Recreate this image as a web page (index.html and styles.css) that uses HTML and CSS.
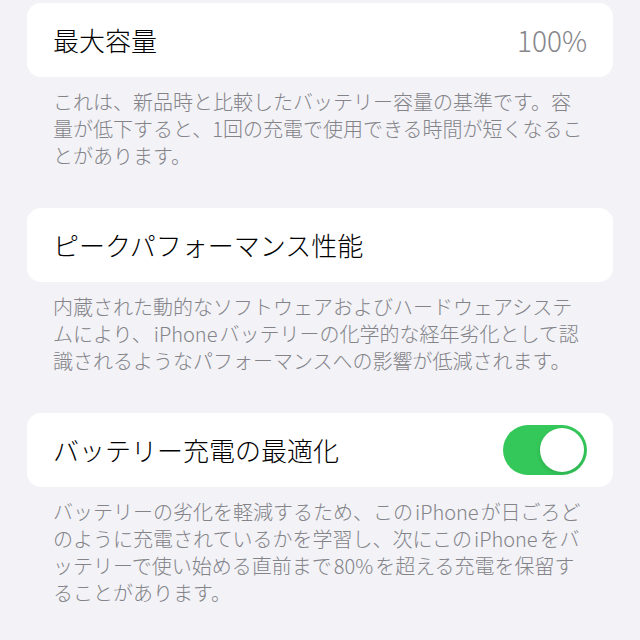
FILE: index.html
```html
<!DOCTYPE html>
<html lang="ja">
<head>
    <meta name="viewport" content="width=device-width, initial-scale=1.0">
    <title>バッテリーの状態と充電</title>
    <link rel="stylesheet" href="styles.css">
</head>
<body>
    <div class="settings">
        <div class="group">
            <div class="cell">
                <span class="label">最大容量</span>
                <span class="value">100%</span>
            </div>
            <p class="footer">これは、新品時と比較したバッテリー容量の基準です。容<br>量が低下すると、1回の充電で使用できる時間が短くなるこ<br>とがあります。</p>
        </div>

        <div class="group">
            <div class="cell">
                <span class="label">ピークパフォーマンス性能</span>
            </div>
            <p class="footer">内蔵された動的なソフトウェアおよびハードウェアシステ<br>ムにより、<span class="latin">iPhone</span>バッテリーの化学的な経年劣化として認<br>識されるようなパフォーマンスへの影響が低減されます。</p>
        </div>

        <div class="group">
            <div class="cell">
                <span class="label">バッテリー充電の最適化</span>
                <span class="switch on"><span class="knob"></span></span>
            </div>
            <p class="footer">バッテリーの劣化を軽減するため、この<span class="latin">iPhone</span>が日ごろど<br>のように充電されているかを学習し、次にこの<span class="latin">iPhone</span>をバ<br>ッテリーで使い始める直前まで<span class="latin">80%</span>を超える充電を保留す<br>ることがあります。</p>
        </div>
    </div>
</body>
</html>
```

FILE: styles.css
```css
body {
    margin: 0;
    background: #f2f2f7;
    font-family: "Noto Sans CJK JP", "Noto Sans", sans-serif;
    color: #000;
}
.settings {
    padding: 3px 27px 0;
}
.group {
    margin-bottom: 39px;
}
.cell {
    height: 74px;
    display: flex;
    align-items: center;
    justify-content: space-between;
    padding: 0 26px;
    background: #fff;
    border-radius: 14px;
}
.label {
    font-size: 26px;
    font-weight: 300;
    line-height: 1;
}
.value {
    font-size: 28px;
    font-weight: 300;
    line-height: 1;
    color: #86868b;
}
.footer {
    margin: 0;
    padding: 11px 26px 0;
    font-size: 20px;
    font-weight: 300;
    line-height: 27px;
    color: #838388;
    white-space: nowrap;
}
.latin {
    margin: 0 2px;
}
.switch {
    width: 84px;
    height: 50px;
    border-radius: 25px;
    background: #e9e9ea;
    display: flex;
    align-items: center;
    padding: 0 3px;
    box-sizing: border-box;
}
.switch.on {
    background: #34c759;
    justify-content: flex-end;
}
.knob {
    width: 44px;
    height: 44px;
    border-radius: 50%;
    background: #fff;
    box-shadow: 0 2px 4px rgba(0, 0, 0, 0.12);
}
```
